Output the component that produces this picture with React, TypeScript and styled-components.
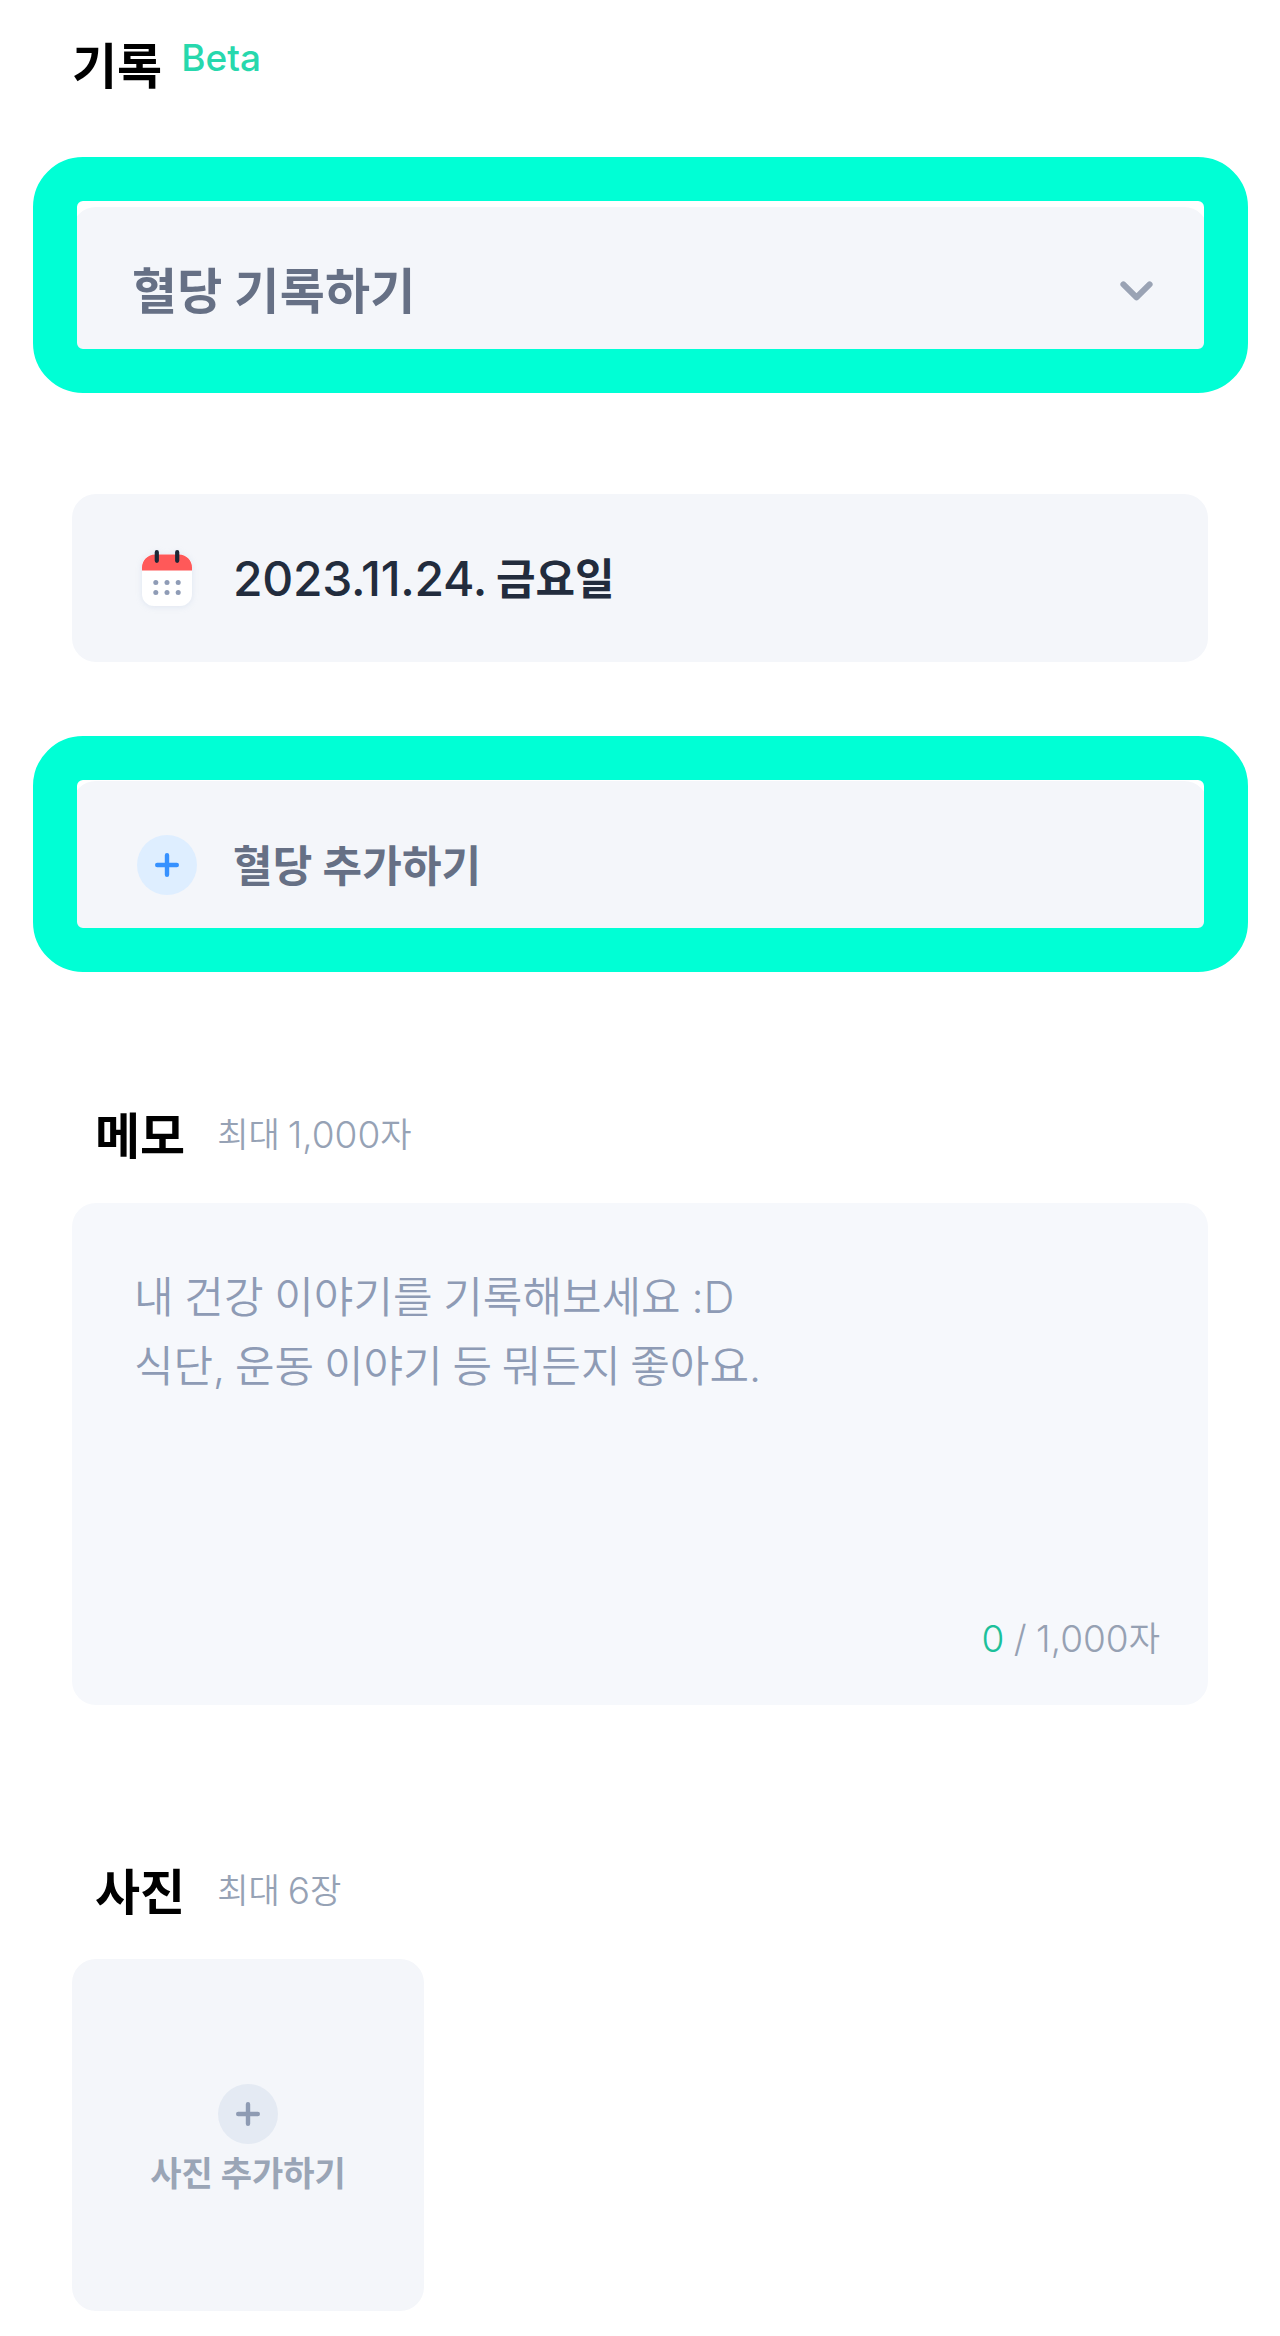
import React from "react";
import styled, { createGlobalStyle } from "styled-components";

const GlobalStyle = createGlobalStyle`
  *, *::before, *::after { box-sizing: border-box; }
  html, body { margin: 0; padding: 0; background: #fff; }
  body { font-family: Inter, "Noto Sans CJK KR", sans-serif; }
`;

const Page = styled.main`
  display: flex;
  flex-direction: column;
  width: 1280px;
  height: 2336px;
  padding: 0 72px;
  background: #fff;
`;

const Header = styled.header`
  display: flex;
  align-items: center;
  gap: 19px;
  height: 130px;
  margin-bottom: 77px;
`;

type TextProps = {
  $size: number;
  $weight?: number;
  $color?: string;
  $track?: number;
  $wordGap?: number;
};

const Text = styled.span<TextProps>`
  margin: 0;
  padding-top: 3px;
  font-size: ${(p) => p.$size}px;
  font-weight: ${(p) => p.$weight ?? 400};
  color: ${(p) => p.$color ?? "#000"};
  letter-spacing: ${(p) => p.$track ?? 0}px;
  word-spacing: ${(p) => p.$wordGap ?? 0}px;
  line-height: 1.2;
  white-space: pre;
`;

const Heading = styled(Text)`
  padding-top: 5px;
`;

const Hint = styled(Text)`
  padding-top: 1px;
`;

const DateText = styled(Text)`
  padding-top: 1px;
`;

const Hangul = styled.span<{ $size: number; $weight?: number }>`
  font-size: ${(p) => p.$size}px;
  font-weight: ${(p) => p.$weight ?? "inherit"};
  letter-spacing: 0;
  line-height: 1;
  vertical-align: 1px;
`;

const Badge = styled(Text)`
  padding-bottom: 17px;
`;

const Field = styled.div`
  position: relative;
  display: flex;
  align-items: center;
  width: 100%;
  height: 168px;
  margin-bottom: 119px;
  padding: 0 55px 0 60px;
  border-radius: 24px;
  background: #f4f6fa;
`;

const SelectField = styled(Field)`
  justify-content: space-between;
`;

const IconSlot = styled.div`
  display: flex;
  align-items: center;
  justify-content: center;
  width: 70px;
  margin-right: 31px;
`;

const Highlight = styled.div<{ $top: number }>`
  position: absolute;
  top: ${(p) => p.$top}px;
  left: -39px;
  right: -40px;
  height: 236px;
  border: 44px solid #00ffd5;
  border-radius: 50px;
  pointer-events: none;
`;

const SectionTitle = styled.div`
  display: flex;
  align-items: center;
  gap: 32px;
  height: 48px;
  margin-bottom: 44px;
  padding-left: 23px;
`;

const MemoSection = styled.section`
  margin-top: 43px;
`;

const PhotoSection = styled.section`
  margin-top: 162px;
`;

const MemoBox = styled.div`
  display: flex;
  flex-direction: column;
  justify-content: space-between;
  height: 502px;
  padding: 57px 48px 44px 62px;
  border-radius: 24px;
  background: #f6f8fc;
`;

const Lines = styled.div`
  display: flex;
  flex-direction: column;
`;

const Line = styled(Text)`
  height: 69px;
  line-height: 69px;
`;

const Counter = styled.div`
  display: flex;
  justify-content: flex-end;
  line-height: 1;
`;

const PhotoBox = styled.div`
  display: flex;
  flex-direction: column;
  align-items: center;
  width: 352px;
  height: 352px;
  padding-top: 125px;
  border-radius: 24px;
  background: #f4f6fa;
`;

const PhotoLabel = styled(Text)`
  margin-top: 7px;
`;

const Round = styled.div<{ $bg: string }>`
  display: flex;
  align-items: center;
  justify-content: center;
  width: 60px;
  height: 60px;
  border-radius: 50%;
  background: ${(p) => p.$bg};
`;

const Plus = ({ color }: { color: string }) => (
  <svg width="24" height="24" viewBox="0 0 24 24" fill="none" stroke={color} strokeWidth="4.4" strokeLinecap="round">
    <path d="M12 2.2v19.6M2.2 12h19.6" />
  </svg>
);

const Chevron = () => (
  <svg width="33" height="20" viewBox="0 0 33 20" fill="none" stroke="#9aa3b4" strokeWidth="6" strokeLinecap="round" strokeLinejoin="round">
    <path d="M3.4 3.4 16.5 16.3 29.6 3.4" />
  </svg>
);

const CalendarSvg = styled.svg`
  display: block;
  overflow: visible;
  filter: drop-shadow(0 1px 3px rgba(120, 150, 190, 0.16));
`;

const Calendar = () => (
  <CalendarSvg width="50" height="56" viewBox="0 0 50 56">
    <rect x="0" y="4.5" width="50" height="51.5" rx="12" fill="#fff" />
    <path d="M0 20.5V17.5A13 13 0 0 1 13 4.5H37A13 13 0 0 1 50 17.5V20.5Z" fill="#ff5959" />
    <path d="M14.8 2.2v8.6M35.2 2.2v8.6" stroke="#1c2635" strokeWidth="4.2" strokeLinecap="round" />
    {[13.8, 25, 36.2].map((x) => (
      <React.Fragment key={x}>
        <circle cx={x} cy="32.4" r="2.5" fill="#8f9cb6" />
        <circle cx={x} cy="42.5" r="2.5" fill="#8f9cb6" />
      </React.Fragment>
    ))}
  </CalendarSvg>
);

export default function App() {
  return (
    <>
      <GlobalStyle />
      <Page>
        <Header>
          <Heading as="h1" $size={49} $weight={700}>기록</Heading>
          <Badge $size={37} $weight={500} $color="#27d8ad">Beta</Badge>
        </Header>

        <SelectField>
          <Text $size={49} $weight={700} $color="#667085" $track={0.2}>혈당 기록하기</Text>
          <Chevron />
          <Highlight $top={-50} />
        </SelectField>

        <Field>
          <IconSlot><Calendar /></IconSlot>
          <DateText $size={48} $weight={500} $color="#222c3d" $track={-0.3} $wordGap={-3}>
            2023.11.24. <Hangul $size={43} $weight={700}>금요일</Hangul>
          </DateText>
        </Field>

        <Field>
          <IconSlot>
            <Round $bg="#deeeff"><Plus color="#3691ff" /></Round>
          </IconSlot>
          <Text $size={43} $weight={700} $color="#667085" $track={0.1}>혈당 추가하기</Text>
          <Highlight $top={-45} />
        </Field>

        <MemoSection>
          <SectionTitle>
            <Heading as="h2" $size={49} $weight={700}>메모</Heading>
            <Hint $size={37} $weight={350} $color="#96a2b5" $wordGap={-2.5}>
              <Hangul $size={34}>최대</Hangul> 1,000<Hangul $size={34}>자</Hangul>
            </Hint>
          </SectionTitle>
          <MemoBox>
            <Lines>
              <Line $size={43} $weight={350} $color="#8e9bb5" $wordGap={-1.3}>내 건강 이야기를 기록해보세요 :D</Line>
              <Line $size={43} $weight={350} $color="#8e9bb5" $wordGap={-2.3}>식단, 운동 이야기 등 뭐든지 좋아요.</Line>
            </Lines>
            <Counter>
              <Text $size={37} $weight={350} $color="#1cc09a">0</Text>
              <Text $size={37} $weight={350} $color="#96a1b3" $wordGap={-1}>
                {" / 1,000"}<Hangul $size={34}>자</Hangul>
              </Text>
            </Counter>
          </MemoBox>
        </MemoSection>

        <PhotoSection>
          <SectionTitle>
            <Heading as="h2" $size={49} $weight={700}>사진</Heading>
            <Hint $size={37} $weight={350} $color="#96a2b5" $wordGap={-2.5}>
              <Hangul $size={34}>최대</Hangul> 6<Hangul $size={34}>장</Hangul>
            </Hint>
          </SectionTitle>
          <PhotoBox>
            <Round $bg="#e4eaf3"><Plus color="#8e9bb3" /></Round>
            <PhotoLabel $size={34} $weight={700} $color="#9aa5b6">사진 추가하기</PhotoLabel>
          </PhotoBox>
        </PhotoSection>
      </Page>
    </>
  );
}
